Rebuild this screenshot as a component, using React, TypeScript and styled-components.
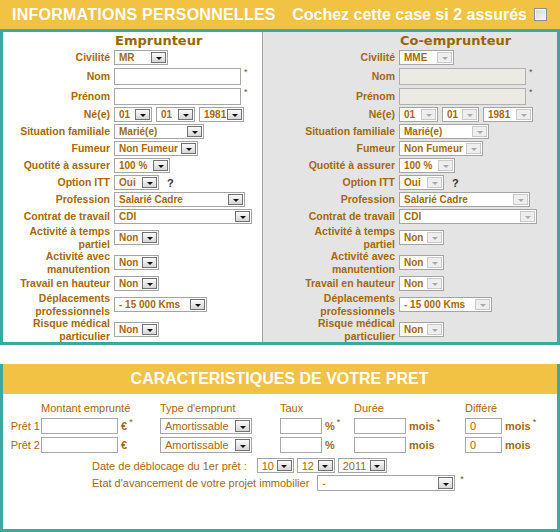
import * as React from "react";
import styled, { createGlobalStyle } from "styled-components";

const BROWN = "#a5690a";
const YELLOW = "#f1c243";
const TEAL = "#3fa79d";

const GlobalStyle = createGlobalStyle`
  body {
    margin: 0;
    background: #fff;
    font-family: "Liberation Sans", Arial, sans-serif;
  }
`;

const Page = styled.div`
  width: 560px;
`;

const Banner = styled.div<{ $center?: boolean }>`
  height: ${(p) => (p.$center ? 30 : 29)}px;
  background: ${YELLOW};
  color: #fff;
  font-weight: bold;
  font-size: 16px;
  display: flex;
  align-items: center;
  justify-content: ${(p) => (p.$center ? "center" : "space-between")};
  padding: 0 13px 0 12px;
`;

const Title = styled.span`
  letter-spacing: 0.25px;
`;

const CheckWrap = styled.label`
  display: flex;
  align-items: center;
  gap: 7px;
`;

const Check = styled.span`
  width: 13px;
  height: 13px;
  box-sizing: border-box;
  border: 1px solid #8e8f8f;
  box-shadow: inset 0 0 0 1px #f4f4f4;
  background: linear-gradient(135deg, #d2d2d2, #fbfbfb);
`;

const PersonBody = styled.div`
  display: grid;
  grid-template-columns: 260px 1fr;
  border: 3px solid ${TEAL};
`;

const Column = styled.div<{ $off?: boolean; $labelW: number }>`
  display: grid;
  grid-template-columns: ${(p) => p.$labelW}px auto;
  grid-auto-rows: minmax(17px, auto);
  column-gap: 4px;
  align-items: center;
  align-content: start;
  background: ${(p) => (p.$off ? "#e4e4e4" : "#fff")};
  border-right: ${(p) => (p.$off ? "none" : "1px solid #a4a4a4")};
`;

const Heading = styled.div`
  grid-column: 2;
  font-family: "DejaVu Sans", Verdana, sans-serif;
  font-weight: bold;
  font-size: 13px;
  line-height: 16px;
  color: #996600;
  padding-left: 1px;
`;

const Label = styled.div`
  text-align: right;
  font-weight: bold;
  font-size: 10.5px;
  line-height: 12.5px;
  color: ${BROWN};
  white-space: nowrap;
`;

const Cell = styled.div<{ $pad?: boolean }>`
  display: flex;
  align-items: center;
  gap: 4px;
  padding: ${(p) => (p.$pad ? "1.5px 0" : "0")};
`;

const Star = styled.span`
  align-self: flex-start;
  font-size: 9px;
  line-height: 9px;
  color: #6b5530;
  margin-left: -1px;
`;

const Question = styled.span`
  font-weight: bold;
  font-size: 11px;
  color: #333;
  margin-left: 4px;
`;

const TextInput = styled.input<{ $w: number; $h?: number }>`
  box-sizing: border-box;
  width: ${(p) => p.$w}px;
  height: ${(p) => p.$h ?? 17}px;
  margin: 0;
  padding: 0 4px;
  border: 1px solid #a8a8a8;
  background: #fff;
  font-family: inherit;
  font-size: 11px;
  color: ${BROWN};
  outline: none;
  &:disabled {
    background: #ebebe4;
    border-color: #b0b0b0;
  }
`;

const SelectBox = styled.span<{ $w: number; $h: number; $bold: boolean }>`
  box-sizing: border-box;
  display: inline-flex;
  width: ${(p) => p.$w}px;
  height: ${(p) => p.$h}px;
  border: 1px solid #a5a5a5;
  background: #fff;
  color: ${BROWN};
  font-size: ${(p) => (p.$bold ? 10 : 11)}px;
  font-weight: ${(p) => (p.$bold ? "bold" : "normal")};
`;

const SelectValue = styled.span`
  flex: 1;
  padding-left: 4px;
  display: flex;
  align-items: center;
  white-space: nowrap;
`;

const Caret = styled.span<{ $off?: boolean }>`
  box-sizing: border-box;
  flex: none;
  width: 15px;
  margin: 1px;
  display: flex;
  align-items: flex-end;
  justify-content: center;
  padding-bottom: 2px;
  border: 1px solid ${(p) => (p.$off ? "#cacaca" : "#737373")};
  background: ${(p) =>
    p.$off ? "#eeeeee" : "linear-gradient(#fafafa, #d6d6d6)"};

  &::after {
    content: "";
    border-left: 3.5px solid transparent;
    border-right: 3.5px solid transparent;
    border-top: 3px solid ${(p) => (p.$off ? "#a9a9a9" : "#111")};
  }
`;

const Select: React.FC<{
  w: number;
  h?: number;
  off?: boolean;
  bold?: boolean;
  children: React.ReactNode;
}> = ({ w, h = 15, off, bold = true, children }) => (
  <SelectBox $w={w} $h={h} $bold={bold}>
    <SelectValue>{children}</SelectValue>
    <Caret $off={off} />
  </SelectBox>
);

type PersonProps = {
  title: string;
  civ: string;
  civW: number;
  dateW: [number, number, number];
  labelW: number;
  off?: boolean;
};

const Person: React.FC<PersonProps> = ({ title, civ, civW, dateW, labelW, off }) => (
  <Column $off={off} $labelW={labelW}>
    <Heading>{title}</Heading>

    <Label>Civilité</Label>
    <Cell>
      <Select w={civW} off={off}>{civ}</Select>
    </Cell>

    <Label>Nom</Label>
    <Cell $pad>
      <TextInput $w={127} disabled={off} />
      <Star>*</Star>
    </Cell>

    <Label>Prénom</Label>
    <Cell $pad>
      <TextInput $w={127} disabled={off} />
      <Star>*</Star>
    </Cell>

    <Label>Né(e)</Label>
    <Cell>
      <Select w={dateW[0]} off={off}>01</Select>
      <Select w={dateW[1]} off={off}>01</Select>
      <Select w={dateW[2]} off={off}>1981</Select>
    </Cell>

    <Label>Situation familiale</Label>
    <Cell>
      <Select w={90} off={off}>Marié(e)</Select>
    </Cell>

    <Label>Fumeur</Label>
    <Cell>
      <Select w={84} off={off}>Non Fumeur</Select>
    </Cell>

    <Label>Quotité à assurer</Label>
    <Cell>
      <Select w={56} off={off}>100 %</Select>
    </Cell>

    <Label>Option ITT</Label>
    <Cell>
      <Select w={45} off={off}>Oui</Select>
      <Question>?</Question>
    </Cell>

    <Label>Profession</Label>
    <Cell>
      <Select w={131} off={off}>Salarié Cadre</Select>
    </Cell>

    <Label>Contrat de travail</Label>
    <Cell>
      <Select w={138} off={off}>CDI</Select>
    </Cell>

    <Label>
      Activité à temps
      <br />
      partiel
    </Label>
    <Cell>
      <Select w={45} off={off}>Non</Select>
    </Cell>

    <Label>
      Activité avec
      <br />
      manutention
    </Label>
    <Cell>
      <Select w={45} off={off}>Non</Select>
    </Cell>

    <Label>Travail en hauteur</Label>
    <Cell>
      <Select w={45} off={off}>Non</Select>
    </Cell>

    <Label>
      Déplacements
      <br />
      professionnels
    </Label>
    <Cell>
      <Select w={93} off={off}>- 15 000 Kms</Select>
    </Cell>

    <Label>
      Risque médical
      <br />
      particulier
    </Label>
    <Cell>
      <Select w={45} off={off}>Non</Select>
    </Cell>
  </Column>
);

const LoanSection = styled.section`
  margin-top: 19px;
  border: 3px solid ${TEAL};
  border-top: none;
  padding-bottom: 38px;
  color: ${BROWN};
  font-size: 11px;
`;

const LoanGrid = styled.div`
  display: grid;
  grid-template-columns: 38px 119px 120px 74px 111px 1fr;
  grid-template-rows: 13px 16px 16px;
  row-gap: 3px;
  align-items: center;
  padding-top: 8px;
`;

const ColHead = styled.div`
  line-height: 13px;
  white-space: nowrap;
`;

const RowLabel = styled.div`
  text-align: right;
  padding-right: 1px;
  white-space: nowrap;
`;

const Unit = styled.span`
  font-weight: bold;
  margin-left: 3px;
`;

const UnitStar = styled.span`
  align-self: flex-start;
  font-size: 9px;
  line-height: 8px;
  margin-left: 2px;
  color: #6b5530;
`;

const LoanCell = styled.div`
  display: flex;
  align-items: center;
`;

const InlineRow = styled.div<{ $gap: number; $top: number; $h: number }>`
  display: flex;
  align-items: center;
  gap: 3px;
  height: ${(p) => p.$h}px;
  margin-top: ${(p) => p.$top}px;
  padding-left: 89px;
  white-space: nowrap;

  & > span:first-child {
    margin-right: ${(p) => p.$gap}px;
  }
`;

const LoanRow: React.FC<{ name: string; req?: boolean; diff: string }> = ({ name, req, diff }) => (
  <>
    <RowLabel>{name}</RowLabel>
    <LoanCell>
      <TextInput $w={77} $h={16} />
      <Unit>€</Unit>
      {req && <UnitStar>*</UnitStar>}
    </LoanCell>
    <LoanCell>
      <Select w={92} h={16} bold={false}>Amortissable</Select>
    </LoanCell>
    <LoanCell>
      <TextInput $w={42} $h={16} />
      <Unit>%</Unit>
      {req && <UnitStar>*</UnitStar>}
    </LoanCell>
    <LoanCell>
      <TextInput $w={52} $h={16} />
      <Unit>mois</Unit>
      {req && <UnitStar>*</UnitStar>}
    </LoanCell>
    <LoanCell>
      <TextInput $w={37} $h={16} defaultValue={diff} />
      <Unit>mois</Unit>
      {req && <UnitStar>*</UnitStar>}
    </LoanCell>
  </>
);

export default function App() {
  return (
    <Page>
      <GlobalStyle />
      <section>
        <Banner>
          <Title>INFORMATIONS PERSONNELLES</Title>
          <CheckWrap>
            Cochez cette case si 2 assurés
            <Check />
          </CheckWrap>
        </Banner>
        <PersonBody>
          <Person title="Emprunteur" civ="MR" civW={54} dateW={[38, 39, 45]} labelW={107} />
          <Person
            title="Co-emprunteur"
            civ="MME"
            civW={55}
            dateW={[39, 37, 50]}
            labelW={132}
            off
          />
        </PersonBody>
      </section>

      <LoanSection>
        <Banner $center>CARACTERISTIQUES DE VOTRE PRET</Banner>
        <LoanGrid>
          <span />
          <ColHead>Montant emprunté</ColHead>
          <ColHead>Type d'emprunt</ColHead>
          <ColHead>Taux</ColHead>
          <ColHead>Durée</ColHead>
          <ColHead>Différé</ColHead>
          <LoanRow name="Prêt 1" req diff="0" />
          <LoanRow name="Prêt 2" diff="0" />
        </LoanGrid>
        <InlineRow $gap={7} $top={5} $h={15}>
          <span>Date de déblocage du 1er prêt :</span>
          <Select w={37} bold={false}>10</Select>
          <Select w={38} bold={false}>12</Select>
          <Select w={49} bold={false}>2011</Select>
        </InlineRow>
        <InlineRow $gap={5} $top={2} $h={16}>
          <span>Etat d'avancement de votre projet immobilier</span>
          <Select w={138} h={16} bold={false}>-</Select>
          <UnitStar>*</UnitStar>
        </InlineRow>
      </LoanSection>
    </Page>
  );
}
